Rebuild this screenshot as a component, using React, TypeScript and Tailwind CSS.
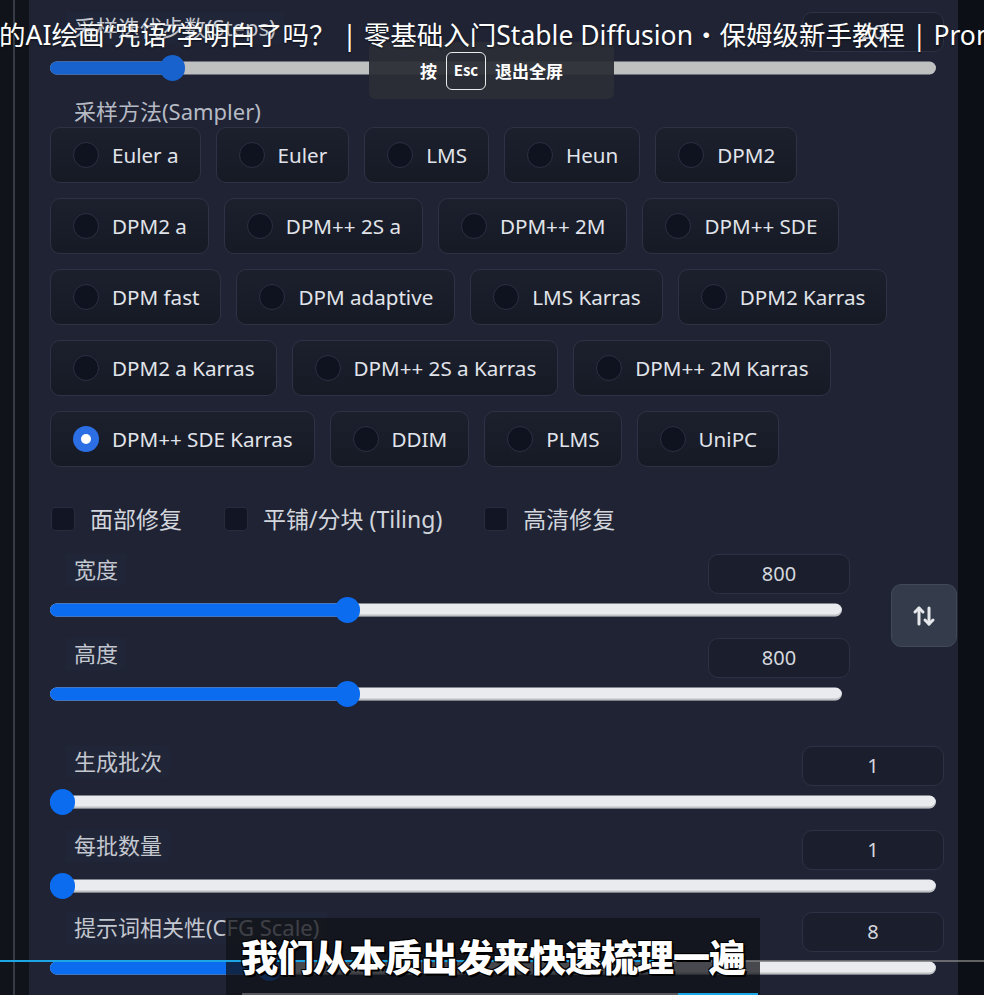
import React from 'react';
import { ArrowUpDown } from 'lucide-react';

// sampler options, one array per visual row
const SAMPLER_ROWS = [
  ['Euler a', 'Euler', 'LMS', 'Heun', 'DPM2'],
  ['DPM2 a', 'DPM++ 2S a', 'DPM++ 2M', 'DPM++ SDE'],
  ['DPM fast', 'DPM adaptive', 'LMS Karras', 'DPM2 Karras'],
  ['DPM2 a Karras', 'DPM++ 2S a Karras', 'DPM++ 2M Karras'],
  ['DPM++ SDE Karras', 'DDIM', 'PLMS', 'UniPC'],
];
const SELECTED = 'DPM++ SDE Karras';

const Slider = ({ pct, dim = false }: { pct: number; dim?: boolean }) => (
  <div className="relative h-[32px] mr-[8px]">
    <div
      className={`absolute left-0 right-0 top-1/2 -translate-y-1/2 h-[13px] rounded-full ${
        dim ? 'bg-[#bfc0c0]' : 'bg-[#e9ebee] shadow-[inset_0_-2px_0_rgba(0,0,0,0.18)]'
      }`}
    />
    <div
      className={`absolute left-0 top-1/2 -translate-y-1/2 h-[13px] rounded-full ${dim ? 'bg-[#1762cc]' : 'bg-[#0b6cf0]'}`}
      style={{ width: `calc(${pct} * (100% - 25px) + 12px)` }}
    />
    <div
      className={`absolute top-1/2 -translate-y-1/2 w-[25px] h-[26px] rounded-full ${dim ? 'bg-[#1762cc]' : 'bg-[#0b6cf0]'}`}
      style={{ left: `calc(${pct} * (100% - 25px))` }}
    />
  </div>
);

const Field = ({ label, value, pct, dim }: { label: string; value: string; pct: number; dim?: boolean }) => (
  <div className="flex flex-col">
    <div className="flex justify-between items-start h-[40px]">
      <span className="ml-[16px] px-[8px] h-[32px] leading-[30px] text-[22px] text-[#c3c7cf] bg-[#202537] rounded-br-[6px] whitespace-nowrap">
        {label}
      </span>
      <div className="w-[142px] h-[40px] rounded-[10px] border border-[#2c3243] bg-[#1b1f2d] flex items-center justify-center text-[20px] text-[#d5d8de]">
        {value}
      </div>
    </div>
    <Slider pct={pct} dim={dim} />
  </div>
);

const Radio = ({ label }: { label: string }) => {
  const on = label === SELECTED;
  return (
    <div className="h-[56px] rounded-[10px] border border-[#2d3344] bg-gradient-to-b from-[#1c202d] to-[#161a25] flex items-center pl-[22px] pr-[21px] gap-[13px] whitespace-nowrap">
      {on ? (
        <span className="w-[26px] h-[26px] rounded-full bg-[#2c6fe4] flex items-center justify-center">
          <span className="w-[10px] h-[10px] rounded-full bg-white" />
        </span>
      ) : (
        <span className="w-[26px] h-[26px] rounded-full bg-[#0f1320] border border-[#2b3142]" />
      )}
      <span className="text-[20.6px] text-[#e1e4ea]">{label}</span>
    </div>
  );
};

const Check = ({ label }: { label: string }) => (
  <div className="flex items-center gap-[15px]">
    <span className="w-[24px] h-[24px] rounded-[4px] bg-[#121624] border border-[#262c3b]" />
    <span className="text-[23px] leading-[24px] text-[#d2d5dc] whitespace-nowrap">{label}</span>
  </div>
);

export default function App() {
  return (
    <div className="relative w-[984px] h-[995px] overflow-hidden bg-[#0d0f16] flex font-['Noto_Sans','Noto_Sans_CJK_SC',sans-serif]">
      {/* left edge of the player */}
      <div className="w-[29px] shrink-0 bg-[#11131a]">
        <div className="ml-[13px] w-[2px] h-full bg-[#363a45]" />
      </div>

      {/* settings panel */}
      <div className="w-[929px] shrink-0 bg-[#1f2334] pl-[21px] pr-[1px] pt-[12px]">
        <div className="pr-[13px]">
          <Field label="采样迭代步数(Steps)" value="20" pct={0.128} dim />
        </div>

        <div className="mt-[12px] ml-[16px] px-[8px] h-[30px] leading-[30px] text-[22px] text-[#b6bac4] w-fit">
          采样方法(Sampler)
        </div>
        <div className="mt-[1px] flex flex-col gap-[15px]">
          {SAMPLER_ROWS.map((row, i) => (
            <div key={i} className="flex gap-[15px]">
              {row.map((s) => (
                <Radio key={s} label={s} />
              ))}
            </div>
          ))}
        </div>

        <div className="mt-[40px] ml-[1px] flex gap-[42px]">
          <Check label="面部修复" />
          <Check label="平铺/分块 (Tiling)" />
          <Check label="高清修复" />
        </div>

        <div className="mt-[23px] flex items-start">
          <div className="w-[800px] flex flex-col gap-[12px]">
            <Field label="宽度" value="800" pct={0.371} />
            <Field label="高度" value="800" pct={0.371} />
          </div>
          <button className="ml-[41px] mt-[30px] w-[66px] h-[63px] rounded-[10px] bg-[#343b4b] border border-[#414959] flex items-center justify-center text-[#e6e8ec]">
            <ArrowUpDown size={24} strokeWidth={3} />
          </button>
        </div>

        <div className="mt-[36px] pr-[13px] flex flex-col gap-[12px]">
          <Field label="生成批次" value="1" pct={0} />
          <Field label="每批数量" value="1" pct={0} />
          <div className="-mt-[2px]">
            <Field label="提示词相关性(CFG Scale)" value="8" pct={0.24} />
          </div>
        </div>
      </div>

      {/* video title overlay */}
      <div className="absolute left-[-1px] top-[19px] whitespace-nowrap text-[26.5px] leading-[30px] text-white [text-shadow:0_1px_2px_rgba(0,0,0,0.6)] z-20">
        的AI绘画“咒语”学明白了吗？ | 零基础入门Stable Diffusion
        <span className="font-['Noto_Sans_CJK_SC',sans-serif]">・</span>
        保姆级新手教程 | Prompt
      </div>

      {/* fullscreen hint */}
      <div className="absolute left-[369px] top-[42px] w-[245px] h-[57px] rounded-[6px] bg-[#2b2e36]/95 flex items-center justify-center gap-[9px] text-white font-bold text-[17px] font-['Noto_Sans_CJK_SC',sans-serif] z-10">
        <span>按</span>
        <span className="w-[40px] h-[38px] rounded-[6px] border-[1.5px] border-white/90 flex items-center justify-center text-[15px]">
          Esc
        </span>
        <span>退出全屏</span>
      </div>

      {/* subtitle */}
      <div className="absolute left-[226px] top-[918px] w-[534px] h-[77px] bg-[#111318]/75 flex items-center justify-center">
        <span className="relative z-30 text-[37px] font-black tracking-[-1px] text-white font-['Noto_Sans_CJK_SC',sans-serif] [text-shadow:2px_2px_0_#000,-1px_-1px_0_#000,1px_-1px_0_#000,-1px_1px_0_#000]">
          我们从本质出发来快速梳理一遍
        </span>
      </div>

      {/* player progress bars */}
      <div className="absolute left-0 top-[960px] w-[673px] h-[2px] bg-[#1ca6e6] z-20" />
      <div className="absolute left-[673px] top-[960px] w-[311px] h-[2px] bg-[#9a9a9a]/60 z-20" />
      <div className="absolute left-[242px] top-[993px] w-[436px] h-[2px] bg-[#bbbbbb]/40" />
      <div className="absolute left-[678px] top-[993px] w-[80px] h-[2px] bg-[#1ca6e6]" />
    </div>
  );
}
